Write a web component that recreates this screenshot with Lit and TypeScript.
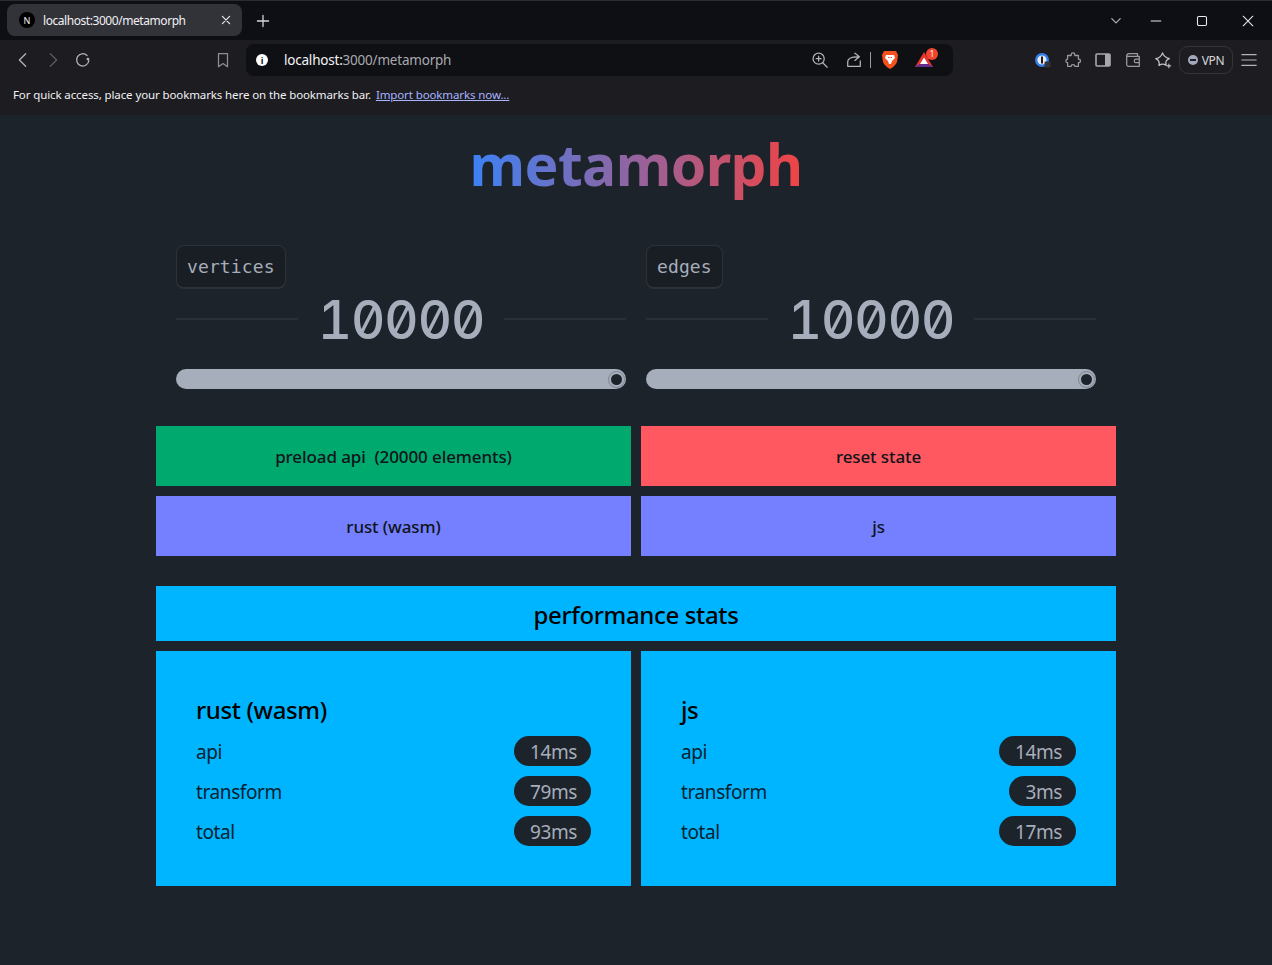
import { LitElement, html, css, svg } from 'lit';
import { customElement } from 'lit/decorators.js';

const icon = (size: number, body: unknown, color = '#b4b4b8') => html`
  <svg width=${size} height=${size} viewBox="0 0 20 20" fill="none" stroke=${color} stroke-width="1.4" stroke-linecap="round" stroke-linejoin="round">${body}</svg>
`;

const icons = {
  back: svg`<path d="M13 3 L6 10 L13 17"/>`,
  forward: svg`<path d="M7 3 L14 10 L7 17"/>`,
  reload: svg`<path d="M16.5 10.5 A6.8 6.8 0 1 1 14.5 5"/><circle cx="15.5" cy="9" r="1.6" fill="#b4b4b8" stroke="none"/>`,
  bookmark: svg`<path d="M5 3 H15 V17.5 L10 14 L5 17.5 Z"/>`,
  zoom: svg`<circle cx="8.5" cy="8.5" r="6.2"/><path d="M13 13 L18 18 M8.5 5.8 V11.2 M5.8 8.5 H11.2"/>`,
  share: svg`<path d="M17 11 V17 H3 V12 C3 8 7 6.5 14 6.5 M11 2.5 L16 6.5 L11 10.5"/>`,
  puzzle: svg`<path d="M8 4 C8 1.5 12 1.5 12 4 V5 H16 V9 C19 9 19 13 16 13 V17 H12 C12 14.5 8 14.5 8 17 H4 V13 C1.5 13 1.5 9 4 9 V5 H8 Z"/>`,
  wallet: svg`<path d="M3 6 C3 4 4 3 6 3 H15 V5.5 M3 6 V15 C3 16.5 4 17 5 17 H17 V6 H5 C4 6 3 6 3 6 Z M17 9 H13 C11 9 11 13 13 13 H17"/>`,
  star: svg`<path d="M9.5 2 C10.5 5.5 12 7 17 8.5 C13.5 10 12.5 11.5 13.5 16 C11 14 8.5 14 5.5 16 C6.5 12 5.5 10 2 8.5 C6.5 7.5 8.5 5.5 9.5 2 Z"/><path d="M16.5 14.5 V18.5 M14.5 16.5 H18.5" stroke-width="1.2"/>`,
};

@customElement('browser-chrome')
export class BrowserChrome extends LitElement {
  static override styles = css`
    :host {
      display: block;
      font-family: 'Noto Sans', 'Open Sans', sans-serif;
      color: #f1f1f3;
    }
    .strip {
      display: flex;
      align-items: center;
      height: 40px;
      padding: 0 1px 0 7px;
      background: #0e0f14;
      border-top: 1px solid #2c2c30;
      box-sizing: border-box;
    }
    .tab {
      display: flex;
      align-items: center;
      width: 235px;
      height: 32px;
      margin-top: -1px;
      padding-left: 12px;
      box-sizing: border-box;
      background: #323239;
      border-radius: 8px;
      font-size: 12px;
      letter-spacing: -0.44px;
    }
    .favicon {
      display: grid;
      place-items: center;
      width: 16px;
      height: 16px;
      margin-right: 8px;
      border-radius: 50%;
      background: #000;
      font-size: 9px;
      letter-spacing: 0;
    }
    .tab-title {
      flex: 1;
    }
    .tab-close {
      display: flex;
      margin-right: 10px;
    }
    .new-tab {
      display: flex;
      margin-left: 14px;
    }
    .win {
      display: flex;
      align-items: center;
      margin-left: auto;
    }
    .win > span {
      display: grid;
      place-items: center;
      width: 46px;
    }
    .win > .chev {
      width: 30px;
      margin-right: 2px;
    }
    .toolbar {
      display: flex;
      align-items: center;
      height: 40px;
      padding: 0 8px;
      box-sizing: border-box;
      background: #1c1c21;
    }
    .btn {
      display: grid;
      place-items: center;
      width: 30px;
      flex: none;
    }
    .gap-nav {
      width: 110px;
    }
    .address {
      display: flex;
      align-items: center;
      flex: none;
      width: 707px;
      height: 32px;
      margin: 0 75px 0 8px;
      padding: 0 19px 0 8px;
      box-sizing: border-box;
      background: #0f1014;
      border-radius: 8px;
      font-size: 13.5px;
      letter-spacing: -0.21px;
      color: #a9a9af;
    }
    .info {
      display: grid;
      place-items: center;
      width: 12px;
      height: 12px;
      margin: 0 16px 0 2px;
      border-radius: 50%;
      background: #fff;
      color: #0f1014;
      font-size: 9px;
      font-weight: 700;
      letter-spacing: 0;
    }
    .host {
      color: #f4f4f6;
    }
    .addr-end {
      display: flex;
      align-items: center;
      margin-left: auto;
    }
    .addr-end svg {
      display: block;
    }
    .addr-gap {
      width: 16px;
    }
    .sep {
      width: 1px;
      height: 16px;
      margin: 0 10px 0 7px;
      background: #9a9aa0;
    }
    .bat {
      position: relative;
      margin-left: 15px;
      width: 20px;
      height: 20px;
    }
    .badge {
      position: absolute;
      top: -2px;
      left: 12px;
      width: 12px;
      height: 12px;
      border-radius: 50%;
      background: #f4452c;
      color: #fff;
      font-size: 8px;
      line-height: 12px;
      text-align: center;
      letter-spacing: 0;
    }
    .vpn {
      display: flex;
      align-items: center;
      justify-content: center;
      gap: 4px;
      flex: none;
      width: 54px;
      height: 28px;
      margin-left: 1px;
      margin-right: 1px;
      box-sizing: border-box;
      border: 1px solid #34343a;
      border-radius: 9px;
      font-size: 12px;
      letter-spacing: -0.3px;
      color: #d8d8dc;
    }
    .vpn-dot {
      position: relative;
      width: 10px;
      height: 10px;
      border-radius: 50%;
      background: #a4a8bc;
    }
    .vpn-dot::after {
      content: '';
      position: absolute;
      left: 2px;
      right: 2px;
      top: 4px;
      height: 2px;
      background: #1c1c21;
    }
    .bookmarks {
      display: flex;
      align-items: center;
      gap: 5px;
      height: 35px;
      padding: 0 0 7px 13px;
      box-sizing: border-box;
      background: #1c1c21;
      font-size: 11.5px;
      letter-spacing: -0.11px;
    }
    .bookmarks a {
      color: #a9b4ff;
      text-decoration: underline;
    }
  `;

  override render() {
    return html`
      <div class="strip">
        <div class="tab">
          <span class="favicon">N</span>
          <span class="tab-title">localhost:3000/metamorph</span>
          <span class="tab-close">${icon(12, svg`<path d="M4 4 L16 16 M16 4 L4 16" stroke-width="2"/>`, '#e8e8ea')}</span>
        </div>
        <span class="new-tab">${icon(14, svg`<path d="M10 2 V18 M2 10 H18" stroke-width="1.8"/>`, '#d8d8dc')}</span>
        <div class="win">
          <span class="chev">${icon(12, svg`<path d="M3 6 L10 13 L17 6" stroke-width="2"/>`)}</span>
          <span>${icon(12, svg`<path d="M2 10 H18" stroke-width="1.8"/>`, '#e8e8ea')}</span>
          <span>${icon(12, svg`<rect x="2.5" y="2.5" width="15" height="15" rx="2" stroke-width="1.8"/>`, '#e8e8ea')}</span>
          <span>${icon(12, svg`<path d="M2 2 L18 18 M18 2 L2 18" stroke-width="1.8"/>`, '#e8e8ea')}</span>
        </div>
      </div>
      <div class="toolbar">
        <span class="btn">${icon(18, icons.back)}</span>
        <span class="btn">${icon(18, icons.forward, '#5c5c62')}</span>
        <span class="btn">${icon(18, icons.reload)}</span>
        <span class="gap-nav"></span>
        <span class="btn">${icon(18, icons.bookmark, '#8e8e94')}</span>
        <div class="address">
          <span class="info">i</span>
          <span><span class="host">localhost:</span>3000/metamorph</span>
          <div class="addr-end">
            ${icon(18, icons.zoom)}
            <span class="addr-gap"></span>
            ${icon(18, icons.share)}
            <span class="sep"></span>
            <svg width="18" height="20" viewBox="0 0 18 20">
              <path d="M3 1 H15 L17 5 L16 12 C15 15 11 18 9 19 C7 18 3 15 2 12 L1 5 Z" fill="#f4511e"/>
              <path d="M5 5 H13 L14 8 L11 11 L10 14 H8 L7 11 L4 8 Z" fill="#fff"/>
              <path d="M7 7.5 H8.5 M9.5 7.5 H11" stroke="#f4511e" stroke-width="1.2"/>
            </svg>
            <span class="bat">
              <svg width="20" height="20" viewBox="0 0 20 20">
                <path d="M10 2 L19 17 H1 Z" fill="#e5352d"/>
                <path d="M1 17 L5.5 14 H14.5 L19 17 Z" fill="#662d91"/>
                <path d="M10 7.5 L14 14 H6 Z" fill="#fff"/>
              </svg>
              <span class="badge">1</span>
            </span>
          </div>
        </div>
        <span class="btn">
          <svg width="18" height="18" viewBox="0 0 18 18">
            <circle cx="8" cy="9" r="7" fill="#2f80ed"/>
            <circle cx="8" cy="9" r="4.6" fill="#e8eaf0"/>
            <rect x="7" y="5.5" width="2" height="7" fill="#1c1c21"/>
            <rect x="10.5" y="10.5" width="6" height="6" rx="1" fill="#34343a"/>
          </svg>
        </span>
        <span class="btn">${icon(18, icons.puzzle, '#9a9aa0')}</span>
        <span class="btn">
          <svg width="16" height="14" viewBox="0 0 16 14">
            <rect x="1" y="1" width="14" height="12" rx="1" fill="none" stroke="#a8a8ae" stroke-width="1.6"/>
            <rect x="10" y="1" width="5" height="12" fill="#a8a8ae"/>
          </svg>
        </span>
        <span class="btn">${icon(18, icons.wallet, '#9a9aa0')}</span>
        <span class="btn">${icon(18, icons.star, '#c4c4c8')}</span>
        <span class="vpn"><span class="vpn-dot"></span>VPN</span>
        <span class="btn">${icon(18, svg`<path d="M2 4 H18 M2 10 H18 M2 16 H18" stroke-width="1.2"/>`)}</span>
      </div>
      <div class="bookmarks">
        <span>For quick access, place your bookmarks here on the bookmarks bar.</span>
        <a>Import bookmarks now...</a>
      </div>
    `;
  }
}

const results = [
  { name: 'rust (wasm)', api: 14, transform: 79, total: 93 },
  { name: 'js', api: 14, transform: 3, total: 17 },
];

@customElement('app-root')
export class App extends LitElement {
  static override styles = css`
    :host {
      display: block;
      height: 965px;
      overflow: hidden;
      background: #1d232a;
      font-family: 'Noto Sans', 'Open Sans', sans-serif;
    }
    .page {
      width: 960px;
      margin: 0 auto;
    }
    .title {
      margin: 0;
      height: 100px;
      text-align: center;
      font-size: 57px;
      line-height: 98px;
      font-weight: 700;
      letter-spacing: -0.6px;
    }
    .title span {
      background: linear-gradient(to right, #3b82f6, #ef4444);
      -webkit-background-clip: text;
      -webkit-text-fill-color: transparent;
    }
    .sliders {
      display: grid;
      grid-template-columns: 450px 450px;
      gap: 20px;
      padding: 30px 20px 37px;
    }
    .kbd {
      display: inline-block;
      height: 44px;
      padding: 0 10px;
      box-sizing: border-box;
      background: #191e24;
      border: 1px solid #2d3239;
      border-bottom-width: 2px;
      border-radius: 8px;
      color: #a6adbb;
      font-family: 'DejaVu Sans Mono', monospace;
      font-size: 18px;
      line-height: 41px;
      letter-spacing: 0.12px;
    }
    .divider {
      display: flex;
      align-items: center;
      gap: 20px;
      height: 60px;
      padding-top: 1px;
      box-sizing: border-box;
      color: #a6adbb;
      font-family: 'Inter', 'DejaVu Sans Mono', monospace;
      font-size: 53px;
      font-weight: 500;
      letter-spacing: -1px;
      font-feature-settings: 'zero', 'tnum';
    }
    .divider::before,
    .divider::after {
      content: '';
      flex: 1;
      height: 2px;
      margin-top: -1px;
      background: #2b3038;
    }
    .track {
      display: flex;
      justify-content: flex-end;
      align-items: center;
      height: 20px;
      margin-top: 20px;
      background: #a6adbb;
      border-radius: 10px;
    }
    .thumb {
      width: 11px;
      height: 11px;
      margin-right: 1px;
      border: 3px solid #a6adbb;
      outline: 1px solid #7d8593;
      outline-offset: -1px;
      border-radius: 50%;
      background: #1d232a;
    }
    .grid {
      display: grid;
      grid-template-columns: 1fr 1fr;
      gap: 10px;
    }
    .action {
      display: grid;
      place-items: center;
      height: 60px;
      color: #10141a;
      font-size: 17px;
      font-weight: 500;
      letter-spacing: -0.1px;
      white-space: pre;
    }
    .green {
      background: #00a96e;
    }
    .red {
      background: #ff5861;
    }
    .blue {
      background: #7480ff;
    }
    .stats {
      margin-top: 30px;
    }
    .stats-head {
      display: grid;
      place-items: center;
      height: 55px;
      padding-top: 1px;
      margin-bottom: 10px;
      box-sizing: border-box;
      background: #00b5ff;
      color: #000;
      font-size: 24px;
      font-weight: 500;
      letter-spacing: -0.35px;
    }
    .card {
      height: 235px;
      padding: 40px;
      box-sizing: border-box;
      background: #00b5ff;
      color: #000;
    }
    .card h2 {
      margin: 0;
      height: 40px;
      font-size: 24px;
      line-height: 38px;
      font-weight: 500;
      letter-spacing: -0.36px;
    }
    .row {
      display: flex;
      justify-content: space-between;
      align-items: center;
      height: 40px;
      color: #04222f;
      font-size: 19px;
      letter-spacing: -0.4px;
    }
    .label {
      padding-top: 2px;
    }
    .pill {
      display: grid;
      place-items: center;
      height: 30px;
      padding: 2px 14px 0 16px;
      box-sizing: border-box;
      border-radius: 15px;
      background: #1d232a;
      color: #a6adbb;
    }
  `;

  override render() {
    return html`
      <browser-chrome></browser-chrome>
      <div class="page">
        <h1 class="title"><span>metamorph</span></h1>
        <div class="sliders">
          ${['vertices', 'edges'].map(
            (label) => html`
              <div>
                <span class="kbd">${label}</span>
                <div class="divider">10000</div>
                <div class="track"><span class="thumb"></span></div>
              </div>
            `,
          )}
        </div>
        <div class="grid">
          <div class="action green">preload api  (20000 elements)</div>
          <div class="action red">reset state</div>
          <div class="action blue">rust (wasm)</div>
          <div class="action blue">js</div>
        </div>
        <div class="stats">
          <div class="stats-head">performance stats</div>
          <div class="grid">
            ${results.map(
              (r) => html`
                <div class="card">
                  <h2>${r.name}</h2>
                  <div class="row"><span class="label">api</span><span class="pill">${r.api}ms</span></div>
                  <div class="row"><span class="label">transform</span><span class="pill">${r.transform}ms</span></div>
                  <div class="row"><span class="label">total</span><span class="pill">${r.total}ms</span></div>
                </div>
              `,
            )}
          </div>
        </div>
      </div>
    `;
  }
}
